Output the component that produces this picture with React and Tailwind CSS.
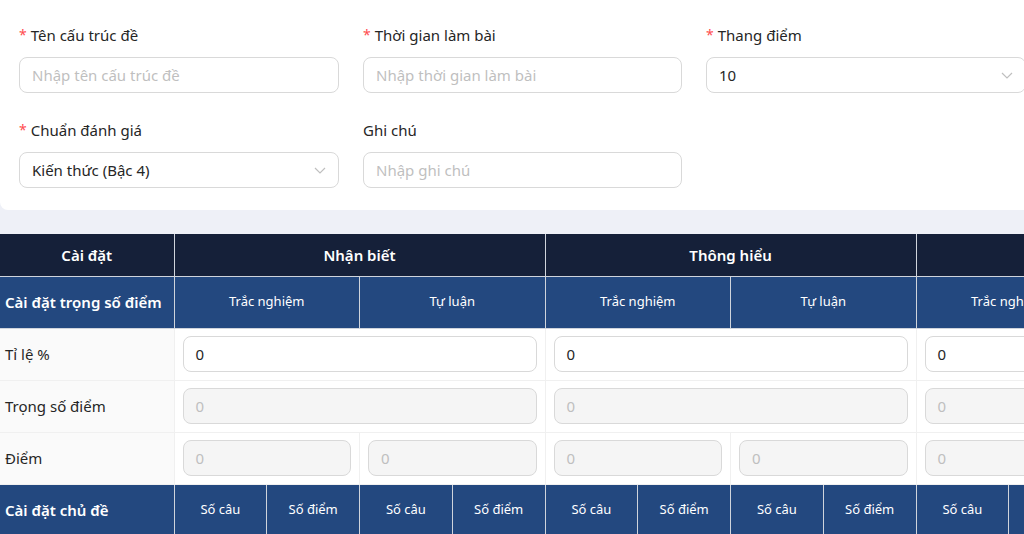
import React from 'react';

const groups = ['Nhận biết', 'Thông hiểu', 'Vận dụng', 'Vận dụng cao'];

function Label({ required, children }) {
  return (
    <div className="h-[22px] leading-[22px] mb-[11px] text-[15px] text-[#262626] flex items-center">
      {required && <span className="text-[#ff4d4f] mr-1 text-[14px]">*</span>}
      {children}
    </div>
  );
}

function Chevron() {
  return (
    <svg width="12" height="12" viewBox="0 0 12 12" className="text-[#bfbfbf]">
      <polyline points="1,4 6,9 11,4" fill="none" stroke="currentColor" strokeWidth="1.2" />
    </svg>
  );
}

function Field({ label, required, placeholder, value, select }) {
  return (
    <div>
      <Label required={required}>{label}</Label>
      <div className="h-9 rounded-lg border border-[#d9d9d9] bg-white px-3 flex items-center justify-between text-[15px]">
        {value ? (
          <span className="text-[#262626]">{value}</span>
        ) : (
          <span className="text-[#bfbfbf]">{placeholder}</span>
        )}
        {select && <Chevron />}
      </div>
    </div>
  );
}

function Box({ disabled, children }) {
  return (
    <div
      className={`h-9 rounded-lg border border-[#d9d9d9] px-3 flex items-center text-[15px] ${
        disabled ? 'bg-[#f5f5f5] text-[#bfbfbf]' : 'bg-white text-[#262626]'
      }`}
    >
      {children}
    </div>
  );
}

const head = 'border border-[#cfd4dc] text-white text-center';
const cell = 'border border-[#f0f0f0] bg-white px-2';
const first = 'border border-[#f0f0f0] bg-[#fafafa] px-[5px] text-[15px] text-[#262626] text-left';

export default function App() {
  return (
    <div className="w-[1024px] h-[534px] overflow-hidden bg-[#eef0f7]" style={{ fontFamily: '"Noto Sans", "Open Sans", sans-serif' }}>
      {/* Form card */}
      <div className="w-[1060px] bg-white rounded-b-lg pl-[19px] pt-6 pb-[22px]">
        <div className="grid grid-cols-[320px_319px_320px] gap-x-6 gap-y-[26px]">
          <Field required label="Tên cấu trúc đề" placeholder="Nhập tên cấu trúc đề" />
          <Field required label="Thời gian làm bài" placeholder="Nhập thời gian làm bài" />
          <Field required label="Thang điểm" value="10" select />
          <Field required label="Chuẩn đánh giá" value="Kiến thức (Bậc 4)" select />
          <Field label="Ghi chú" placeholder="Nhập ghi chú" />
        </div>
      </div>

      {/* Weight table */}
      <div className="mt-6">
        <table className="table-fixed border-collapse w-[1658px]">
          <colgroup>
            <col className="w-[174px]" />
            {Array.from({ length: 16 }).map((_, i) => (
              <col key={i} className="w-[92.75px]" />
            ))}
          </colgroup>
          <thead>
            <tr className="bg-[#152039] h-[42px]">
              <th className={`${head} border-t-0 border-l-0 text-[15px] font-semibold`}>Cài đặt</th>
              {groups.map((g) => (
                <th key={g} colSpan={4} className={`${head} border-t-0 text-[15px] font-semibold`}>
                  {g}
                </th>
              ))}
            </tr>
            <tr className="bg-[#23487f] h-[52px]">
              <th className={`${head} border-l-0 text-[15px] font-semibold text-left px-[5px] whitespace-nowrap`}>
                Cài đặt trọng số điểm
              </th>
              {groups.map((g) => (
                <React.Fragment key={g}>
                  <th colSpan={2} className={`${head} text-[13px] font-normal`}>Trắc nghiệm</th>
                  <th colSpan={2} className={`${head} text-[13px] font-normal`}>Tự luận</th>
                </React.Fragment>
              ))}
            </tr>
          </thead>
          <tbody>
            <tr className="h-[52px]">
              <td className={`${first} border-l-0`}>Tỉ lệ %</td>
              {groups.map((g) => (
                <td key={g} colSpan={4} className={cell}>
                  <Box>0</Box>
                </td>
              ))}
            </tr>
            <tr className="h-[52px]">
              <td className={`${first} border-l-0`}>Trọng số điểm</td>
              {groups.map((g) => (
                <td key={g} colSpan={4} className={cell}>
                  <Box disabled>0</Box>
                </td>
              ))}
            </tr>
            <tr className="h-[52px]">
              <td className={`${first} border-l-0`}>Điểm</td>
              {groups.map((g) => (
                <React.Fragment key={g}>
                  <td colSpan={2} className={cell}>
                    <Box disabled>0</Box>
                  </td>
                  <td colSpan={2} className={cell}>
                    <Box disabled>0</Box>
                  </td>
                </React.Fragment>
              ))}
            </tr>
            <tr className="bg-[#23487f] h-[52px]">
              <td className={`${head} border-l-0 text-[15px] font-semibold text-left px-[5px]`}>Cài đặt chủ đề</td>
              {groups.map((g) => (
                <React.Fragment key={g}>
                  <td className={`${head} text-[13px]`}>Số câu</td>
                  <td className={`${head} text-[13px]`}>Số điểm</td>
                  <td className={`${head} text-[13px]`}>Số câu</td>
                  <td className={`${head} text-[13px]`}>Số điểm</td>
                </React.Fragment>
              ))}
            </tr>
          </tbody>
        </table>
      </div>
    </div>
  );
}
